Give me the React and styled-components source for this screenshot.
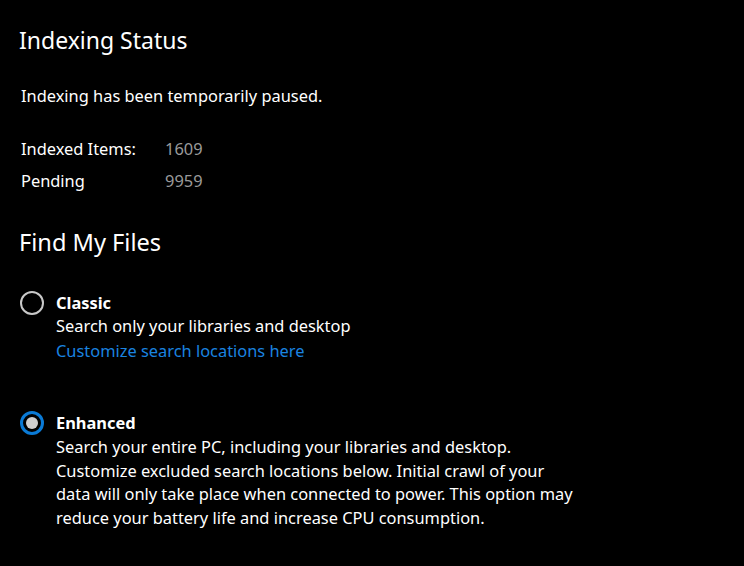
import styled, { createGlobalStyle } from "styled-components";

const Global = createGlobalStyle`
  html, body {
    margin: 0;
    background: #000;
  }
  body {
    font-family: "Noto Sans", "Open Sans", sans-serif;
    color: #fff;
  }
`;

const Page = styled.div`
  width: 744px;
  height: 566px;
  overflow: hidden;
  background: #000;
  padding: 23px 0 0 20px;
  box-sizing: border-box;
`;

const Heading = styled.h2`
  margin: 0;
  font-size: 23px;
  font-weight: 400;
  line-height: 34px;
  color: #fff;
  margin-left: -1px;
`;

const Text = styled.p`
  margin: 0;
  font-size: 16.4px;
  line-height: 23.7px;
  color: ${(p) => (p.$muted ? "#9a9a9a" : "#fff")};
  font-weight: ${(p) => (p.$bold ? 700 : 400)};
`;

const StatusLine = styled(Text)`
  margin: 27px 0 0 1px;
`;

const Stats = styled.div`
  display: grid;
  grid-template-columns: 144px auto;
  row-gap: 8px;
  margin: 29px 0 0 1px;
  font-size: 16.4px;
  line-height: 24px;
`;

const StatLabel = styled.span`
  color: #fff;
`;

const StatValue = styled.span`
  color: #9a9a9a;
`;

const Section = styled(Heading)`
  margin-top: 32px;
  font-size: 23.6px;
`;

const Options = styled.div`
  display: flex;
  flex-direction: column;
  gap: 48px;
  margin-top: 32px;
`;

const Option = styled.div`
  display: flex;
  gap: 11px;
  align-items: flex-start;
`;

const Radio = styled.span`
  flex: none;
  width: 24px;
  height: 24px;
  border-radius: 50%;
  box-sizing: border-box;
  border: ${(p) => (p.$checked ? "3px solid #0a7ad6" : "2.5px solid #c8c8c8")};
  display: flex;
  align-items: center;
  justify-content: center;

  &::after {
    content: "";
    display: ${(p) => (p.$checked ? "block" : "none")};
    width: 12px;
    height: 12px;
    border-radius: 50%;
    background: #cfcfcf;
  }
`;

const Body = styled.div`
  display: flex;
  flex-direction: column;
  margin-left: 1px;
`;

const Link = styled.a`
  font-size: 16.4px;
  line-height: 25px;
  color: #1a84e0;
  text-decoration: none;
  cursor: pointer;
`;

const Desc = styled(Text)`
  max-width: 560px;
`;

export default function App() {
  return (
    <Page>
      <Global />
      <Heading>Indexing Status</Heading>
      <StatusLine>Indexing has been temporarily paused.</StatusLine>
      <Stats>
        <StatLabel>Indexed Items:</StatLabel>
        <StatValue>1609</StatValue>
        <StatLabel>Pending</StatLabel>
        <StatValue>9959</StatValue>
      </Stats>
      <Section>Find My Files</Section>
      <Options>
        <Option>
          <Radio />
          <Body>
            <Text $bold>Classic</Text>
            <Text>Search only your libraries and desktop</Text>
            <Link>Customize search locations here</Link>
          </Body>
        </Option>
        <Option>
          <Radio $checked />
          <Body>
            <Text $bold>Enhanced</Text>
            <Desc>
              Search your entire PC, including your libraries and desktop.
              <br />
              Customize excluded search locations below. Initial crawl of your
              <br />
              data will only take place when connected to power. This option may
              <br />
              reduce your battery life and increase CPU consumption.
            </Desc>
          </Body>
        </Option>
      </Options>
    </Page>
  );
}
